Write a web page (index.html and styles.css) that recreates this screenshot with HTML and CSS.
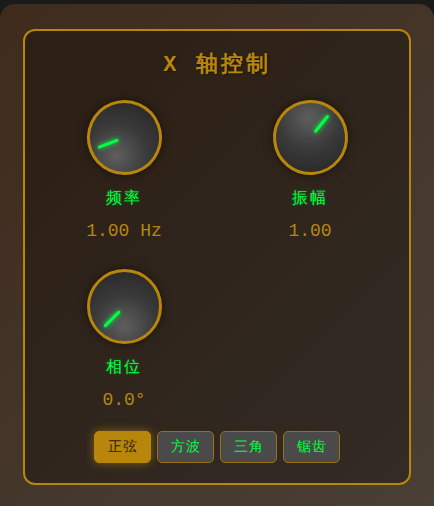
FILE: index.html
```html
<!DOCTYPE html>
<html lang="zh">
  <head>
    <meta charset="UTF-8" />
    <meta name="viewport" content="width=device-width, initial-scale=1.0" />
    <title>X 轴控制</title>
    <link rel="stylesheet" href="styles.css">
  </head>
  <body>
    <div class="page">
      <div class="panel">
        <h2 class="panel-title">X 轴控制</h2>

        <div class="knob-grid">
          <div class="control">
            <div class="knob knob-freq">
              <span class="knob-mark"></span>
            </div>
            <div class="control-label">频率</div>
            <div class="control-value">1.00 Hz</div>
          </div>

          <div class="control">
            <div class="knob knob-amp">
              <span class="knob-mark"></span>
            </div>
            <div class="control-label">振幅</div>
            <div class="control-value">1.00</div>
          </div>

          <div class="control">
            <div class="knob knob-phase">
              <span class="knob-mark"></span>
            </div>
            <div class="control-label">相位</div>
            <div class="control-value">0.0°</div>
          </div>
        </div>

        <div class="wave-buttons">
          <button class="wave-btn active">正弦</button>
          <button class="wave-btn">方波</button>
          <button class="wave-btn">三角</button>
          <button class="wave-btn">锯齿</button>
        </div>
      </div>
    </div>
  </body>
</html>
```

FILE: styles.css
```css
* {
  box-sizing: border-box;
  margin: 0;
  padding: 0;
}
body {
  background-color: #1a1a1a;
  padding-top: 4px;
  font-family: "Courier New", monospace;
  overflow: hidden;
}
.page {
  min-height: 520px;
  background: linear-gradient(135deg, #3e2b1c 0%, #4a4036 100%);
  border-radius: 15px;
  padding: 25px 23px;
}
.panel {
  border: 2px solid #b8860b;
  border-radius: 12px;
  background: rgba(0, 0, 0, 0.3);
  padding: 20px 20px 20px 20px;
}
.panel-title {
  text-align: center;
  color: #b8860b;
  font-size: 22px;
  font-weight: bold;
  letter-spacing: 3px;
  line-height: 30px;
  margin-bottom: 19px;
  text-shadow: 1px 1px 2px rgba(0, 0, 0, 0.5);
}
.knob-grid {
  display: grid;
  grid-template-columns: 1fr 1fr;
  column-gap: 28px;
  row-gap: 28px;
}
.control {
  display: flex;
  flex-direction: column;
  align-items: center;
}
.knob {
  position: relative;
  width: 75px;
  height: 75px;
  border-radius: 50%;
  border: 3px solid #b8860b;
  background: radial-gradient(circle at 30% 30%, #5e5e5e 0%, #3a3a3a 45%, #222 100%);
  box-shadow: 0 0 10px rgba(0, 0, 0, 0.5);
}
.knob-freq {
  transform: rotate(249deg);
}
.knob-amp {
  transform: rotate(39deg);
}
.knob-phase {
  transform: rotate(225deg);
}
.knob-mark {
  position: absolute;
  left: 50%;
  top: 6px;
  width: 3px;
  height: 22px;
  margin-left: -1.5px;
  border-radius: 2px;
  background-color: #00ff41;
  box-shadow: 0 0 5px #00ff41;
}
.control-label {
  margin-top: 15px;
  color: #00ff41;
  font-size: 16px;
  line-height: 19px;
  letter-spacing: 2px;
  text-shadow: 0 0 3px rgba(0, 255, 65, 0.4);
}
.control-value {
  margin-top: 12px;
  color: #b8860b;
  font-size: 18px;
  line-height: 20px;
}
.wave-buttons {
  display: flex;
  justify-content: center;
  gap: 6px;
  margin-top: 21px;
}
.wave-btn {
  height: 32px;
  width: 57px;
  border: 1px solid #9a7012;
  border-radius: 5px;
  background-color: #4a4a4a;
  color: #00ff41;
  font-family: "Courier New", monospace;
  font-size: 14px;
  letter-spacing: 1px;
}
.wave-btn.active {
  background-color: #b8860b;
  border-color: #b8860b;
  color: #2b1d12;
  box-shadow: 0 0 10px rgba(184, 134, 11, 0.6);
}
```
